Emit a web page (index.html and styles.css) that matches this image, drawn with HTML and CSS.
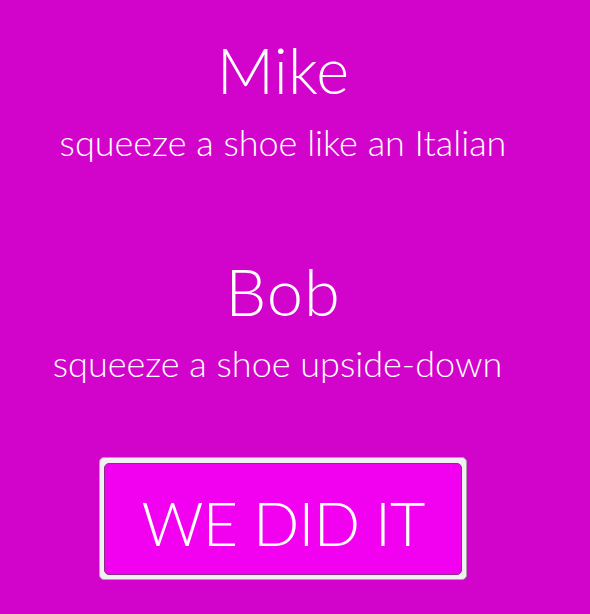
FILE: index.html
```html
<!DOCTYPE html>
<html>
<head>
<meta charset="utf-8">
<link rel="stylesheet" href="styles.css">
</head>
<body>
<main class="page">
  <section class="entry">
    <h1 class="name">Mike</h1>
    <p class="task">squeeze a shoe like an Italian</p>
  </section>
  <section class="entry entry-second">
    <h1 class="name name-wide">Bob</h1>
    <p class="task task-offset">squeeze a shoe upside-down</p>
  </section>
  <div class="actions">
    <div class="btn-frame">
      <button class="btn">WE DID IT</button>
    </div>
  </div>
</main>
</body>
</html>
```
FILE: styles.css
```css
html, body {
  background: #d204cc;
}
body {
  margin: 8px;
  color: #ffffff;
  font-family: Lato, "Open Sans", sans-serif;
  font-weight: 300;
}
.page {
  width: 550px;
  padding-top: 27px;
  display: flex;
  flex-direction: column;
  align-items: center;
  text-align: center;
}
.entry {
  display: flex;
  flex-direction: column;
  align-items: center;
}
.entry-second {
  margin-top: 92px;
}
.name {
  margin: 0;
  font-size: 63px;
  line-height: 70px;
  font-weight: 300;
  letter-spacing: 0.3px;
}
.name-wide {
  font-size: 65px;
  letter-spacing: 1px;
}
.task {
  margin: 15px 0 0;
  font-size: 36px;
  line-height: 44px;
  white-space: nowrap;
}
.task-offset {
  padding-right: 11px;
}
.actions {
  margin-top: 72px;
  display: flex;
  justify-content: center;
}
.btn-frame {
  width: 368px;
  height: 123px;
  box-sizing: border-box;
  background: #f1f1f1;
  border: 1px solid #a89fa8;
  border-radius: 5px;
  padding: 5px 4px 4px 4px;
  display: flex;
}
.btn {
  flex: 1;
  margin: 0;
  background: #f200f0;
  border: 1px solid #8d2a8d;
  border-radius: 5px;
  color: #ffffff;
  font-family: Lato, "Open Sans", sans-serif;
  font-weight: 300;
  font-size: 61px;
  letter-spacing: -0.8px;
  padding: 6px 0 0;
  cursor: pointer;
}
```
